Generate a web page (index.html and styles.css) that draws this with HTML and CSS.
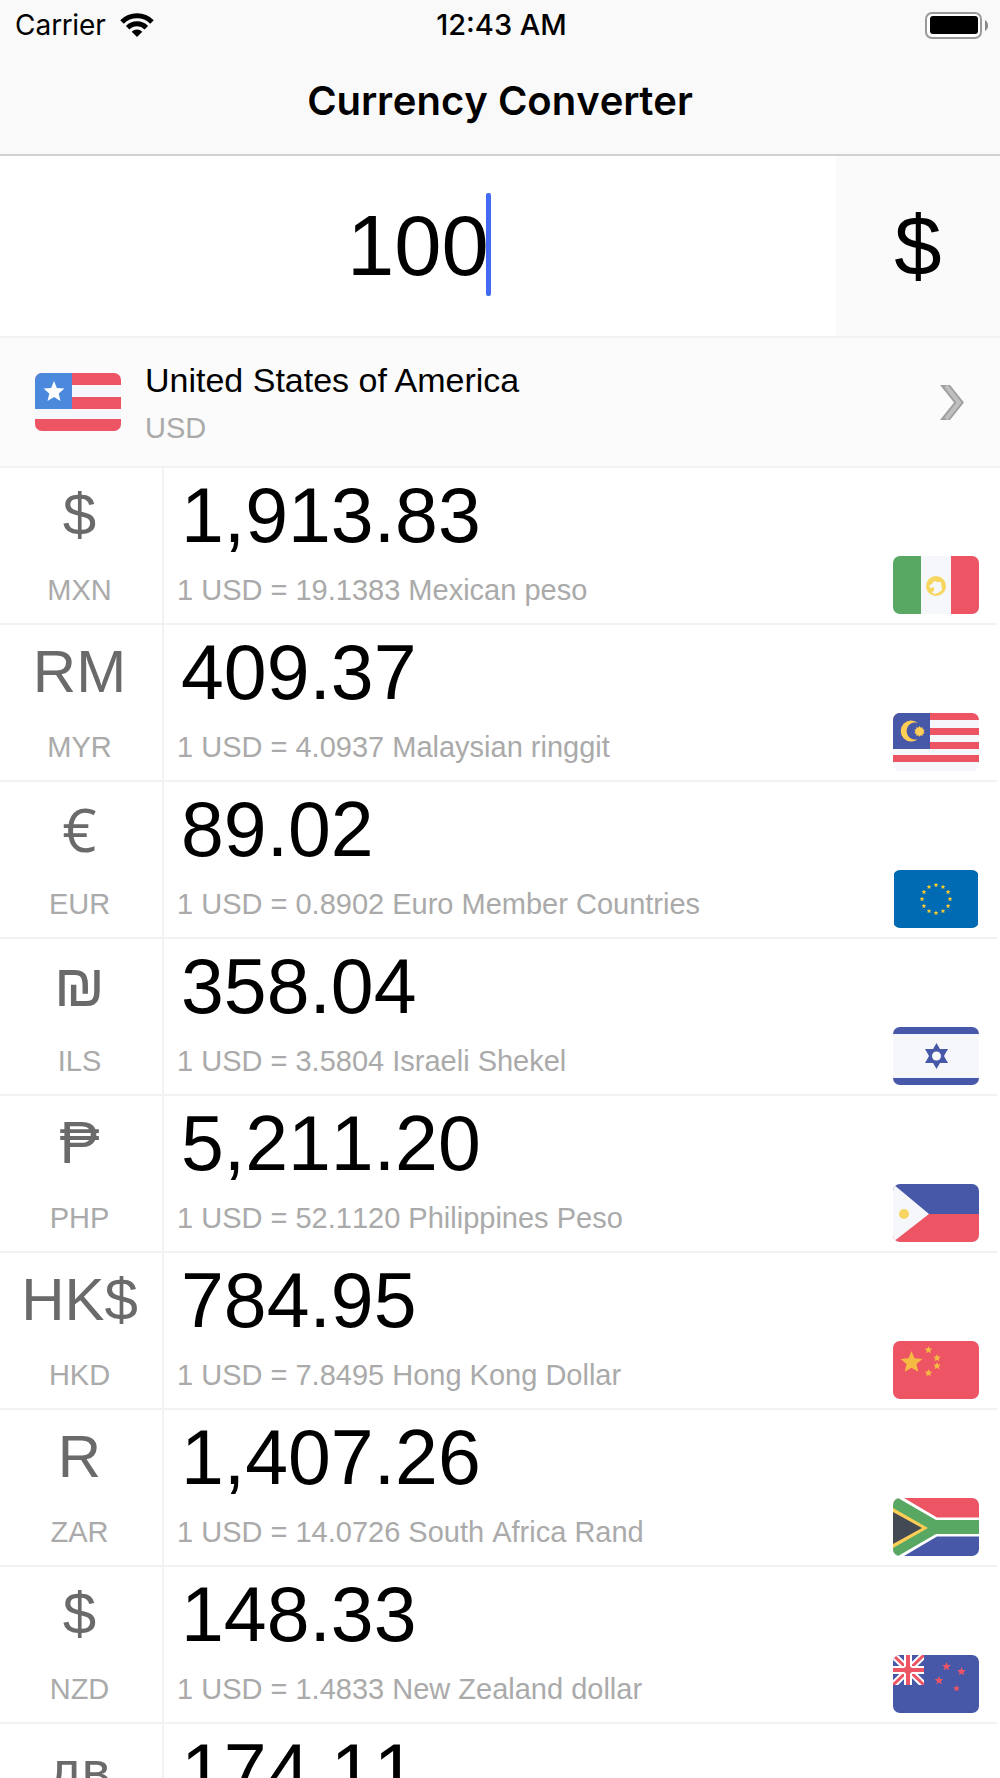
FILE: index.html
```html
<!DOCTYPE html>
<html lang="en">
    <head>
        <meta charset="UTF-8">
        <meta name="viewport" content="width=device-width, initial-scale=1">
        <title>Currency Converter</title>
        <link rel="stylesheet" href="styles.css">
    </head>
    <body>
    <svg class="defs" aria-hidden="true">
        <symbol id="star" viewBox="-10 -10 20 20">
            <path d="M0-10 2.6-3.6 9.5-3.1 4.3 1.4 5.9 8.1 0 4.5-5.9 8.1-4.3 1.4-9.5-3.1-2.6-3.6z"/>
        </symbol>
    </svg>
    <div class="screen">
        <header class="header">
            <div class="status-bar">
                <div class="carrier">
                    <span>Carrier</span>
                    <svg width="34" height="24" viewBox="0 0 34 24">
                        <path d="M2 9A21.2 21.2 0 0 1 32 9M7.7 14.7A13.2 13.2 0 0 1 26.3 14.7" fill="none" stroke="#000" stroke-width="5"/>
                        <path d="M17 24 11.7 18.7A7.5 7.5 0 0 1 22.3 18.7z"/>
                    </svg>
                </div>
                <div class="time">12:43 AM</div>
                <svg class="battery" width="63" height="27" viewBox="0 0 63 27">
                    <rect x="1" y="1" width="55" height="25" rx="6" fill="#fff" stroke="#999" stroke-width="2"/>
                    <rect x="5" y="4" width="48" height="18" rx="3"/>
                    <path d="M60 8q3 2 3 5.500t-3 5.500z" fill="#888"/>
                </svg>
            </div>
            <h1 class="title">Currency Converter</h1>
        </header>

        <div class="amount">
            <div class="amount-field">
                <input type="text" id="id-input-amount" value="100" inputmode="decimal" aria-label="Amount">
                <span class="caret"></span>
            </div>
            <label class="amount-symbol" for="id-input-amount">$</label>
        </div>

        <button type="button" class="base">
            <svg class="flag" viewBox="0 0 86 58">
                <path fill="#f5f7fb" d="M0 0h86v58H0z"/>
                <path fill="#ed5565" d="M0 0h86v12H0zM0 24h86v12H0zM0 46h86v12H0z"/>
                <path fill="#4a89dc" d="M0 0h37v36H0z"/>
                <use href="#star" x="8" y="8" width="22" height="22" fill="#fff"/>
            </svg>
            <span class="base-text">
                <span class="base-name">United States of America</span>
                <span class="base-code">USD</span>
            </span>
            <svg class="chevron" width="24" height="35" viewBox="0 0 24 35">
                <path d="M0 0h10l14 17.500L10 35H0l14-17.500z" fill="#a0a0a0"/>
                <path d="M6 1l13 16.500L6 34" fill="none" stroke="#bfbfbf" stroke-width="4"/>
            </svg>
        </button>

        <ul class="rates">
            <li class="rate">
                <div class="unit">
                    <span class="symbol">$</span>
                    <span class="code">MXN</span>
                </div>
                <div class="info">
                    <div class="value">1,913.83</div>
                    <div class="desc">1 USD = 19.1383 Mexican peso</div>
                </div>
                <svg class="flag" viewBox="0 0 86 58">
                    <path fill="#f5f7fb" d="M0 0h86v58H0z"/>
                    <path fill="#58a864" d="M0 0h28v58H0z"/>
                    <path fill="#ed5565" d="M58 0h28v58H58z"/>
                    <circle cx="43" cy="30" r="10" fill="#f6d660"/>
                    <path fill="#f5f7fb" d="M36 30l4-3 1-2 3 1h4l1 8-4 3-4 1-2-2 2-1v-4l-3 1z"/>
                </svg>
            </li>
            <li class="rate">
                <div class="unit">
                    <span class="symbol">RM</span>
                    <span class="code">MYR</span>
                </div>
                <div class="info">
                    <div class="value">409.37</div>
                    <div class="desc">1 USD = 4.0937 Malaysian ringgit</div>
                </div>
                <svg class="flag" viewBox="0 0 86 58">
                    <path fill="#f5f7fb" d="M0 0h86v58H0z"/>
                    <path fill="#ed5565" d="M0 0h86v7H0zM0 15h86v7H0zM0 29h86v7H0zM0 42h86v7H0z"/>
                    <path fill="#4758a9" d="M0 0h37v36H0z"/>
                    <path fill="#ffce54" d="M25 10a10.500 10.500 0 1 0 0 16a8.500 8.500 0 1 1 0-16z"/>
                    <path fill="#ffce54" d="M26.500 13l1.200 1.800 2-.600 0 2.100 2 .700-1.200 1.500 1.200 1.700-2 .600 0 2-2-.600-1.200 1.600-1.200-1.600-2 .600 0-2-2-.600 1.200-1.700-1.200-1.500 2-.700 0-2.100 2 .600z"/>
                </svg>
            </li>
            <li class="rate">
                <div class="unit">
                    <span class="symbol symbol-euro">€</span>
                    <span class="code">EUR</span>
                </div>
                <div class="info">
                    <div class="value">89.02</div>
                    <div class="desc">1 USD = 0.8902 Euro Member Countries</div>
                </div>
                <svg class="flag" viewBox="0 0 86 58">
                    <rect x="1" width="84" height="58" rx="3" fill="#006ab3"/>
                    <g fill="#fbca2c">
                        <use href="#star" x="40.500" y="12.500" width="5" height="5"/>
                        <use href="#star" x="47.500" y="14.400" width="5" height="5"/>
                        <use href="#star" x="52.600" y="19.500" width="5" height="5"/>
                        <use href="#star" x="54.500" y="26.500" width="5" height="5"/>
                        <use href="#star" x="52.600" y="33.500" width="5" height="5"/>
                        <use href="#star" x="47.500" y="38.600" width="5" height="5"/>
                        <use href="#star" x="40.500" y="40.500" width="5" height="5"/>
                        <use href="#star" x="33.500" y="38.600" width="5" height="5"/>
                        <use href="#star" x="28.400" y="33.500" width="5" height="5"/>
                        <use href="#star" x="26.500" y="26.500" width="5" height="5"/>
                        <use href="#star" x="28.400" y="19.500" width="5" height="5"/>
                        <use href="#star" x="33.500" y="14.400" width="5" height="5"/>
                    </g>
                </svg>
            </li>
            <li class="rate">
                <div class="unit">
                    <span class="symbol">₪</span>
                    <span class="code">ILS</span>
                </div>
                <div class="info">
                    <div class="value">358.04</div>
                    <div class="desc">1 USD = 3.5804 Israeli Shekel</div>
                </div>
                <svg class="flag" viewBox="0 0 86 58">
                    <path fill="#f5f7fb" d="M0 0h86v58H0z"/>
                    <path fill="#4758a9" d="M0 0h86v7H0zM0 51h86v7H0z"/>
                    <path fill="#4758a9" d="M43.500 16l11.500 20h-23z"/>
                    <path fill="#4758a9" d="M43.500 42l11.500-20h-23z"/>
                    <circle cx="43.500" cy="29" r="4.500" fill="#f5f7fb"/>
                </svg>
            </li>
            <li class="rate">
                <div class="unit">
                    <span class="symbol">₱</span>
                    <span class="code">PHP</span>
                </div>
                <div class="info">
                    <div class="value">5,211.20</div>
                    <div class="desc">1 USD = 52.1120 Philippines Peso</div>
                </div>
                <svg class="flag" viewBox="0 0 86 58">
                    <path fill="#4758a9" d="M0 0h86v30H0z"/>
                    <path fill="#ed5565" d="M0 30h86v28H0z"/>
                    <path fill="#f5f7fb" d="M0 0l36 30L0 58z"/>
                    <circle cx="11" cy="30" r="5" fill="#f6d660"/>
                </svg>
            </li>
            <li class="rate">
                <div class="unit">
                    <span class="symbol">HK$</span>
                    <span class="code">HKD</span>
                </div>
                <div class="info">
                    <div class="value">784.95</div>
                    <div class="desc">1 USD = 7.8495 Hong Kong Dollar</div>
                </div>
                <svg class="flag" viewBox="0 0 86 58">
                    <path fill="#ed5565" d="M0 0h86v58H0z"/>
                    <g fill="#f6bb42">
                        <use href="#star" x="7" y="10" width="23" height="23"/>
                        <use href="#star" x="31.500" y="5" width="8" height="8"/>
                        <use href="#star" x="40" y="13" width="8" height="8"/>
                        <use href="#star" x="40" y="21" width="8" height="8"/>
                        <use href="#star" x="31.500" y="28" width="8" height="8"/>
                    </g>
                </svg>
            </li>
            <li class="rate">
                <div class="unit">
                    <span class="symbol">R</span>
                    <span class="code">ZAR</span>
                </div>
                <div class="info">
                    <div class="value">1,407.26</div>
                    <div class="desc">1 USD = 14.0726 South Africa Rand</div>
                </div>
                <svg class="flag" viewBox="0 0 86 58">
                    <path fill="#ed5565" d="M0 0h86v29H0z"/>
                    <path fill="#4758a9" d="M0 29h86v29H0z"/>
                    <path fill="#fff" d="M0 0h11l33 19.500h42v19H44L11 58H0z"/>
                    <path fill="#58a864" d="M0 0h5l38 22h43v14H43L5 58H0z"/>
                    <path fill="#ffce54" d="M0 10l35 20L0 50z"/>
                    <path fill="#434a54" d="M0 14l29 16L0 46z"/>
                </svg>
            </li>
            <li class="rate">
                <div class="unit">
                    <span class="symbol">$</span>
                    <span class="code">NZD</span>
                </div>
                <div class="info">
                    <div class="value">148.33</div>
                    <div class="desc">1 USD = 1.4833 New Zealand dollar</div>
                </div>
                <svg class="flag" viewBox="0 0 86 58">
                    <path fill="#4758a9" d="M0 0h86v58H0z"/>
                    <svg width="31" height="30" viewBox="0 0 31 30">
                        <path stroke="#fff" stroke-width="7" d="M-1-1l33 32M32-1L-1 31"/>
                        <path stroke="#ed5565" stroke-width="3" d="M-1-1l33 32M32-1L-1 31"/>
                        <path stroke="#fff" stroke-width="8" d="M15 0v30M0 15h31"/>
                        <path stroke="#ed5565" stroke-width="4" d="M15 0v30M0 15h31"/>
                        <circle cx="15" cy="15" r="4" fill="#ed5565"/>
                    </svg>
                    <g fill="#ed5565">
                        <use href="#star" x="49" y="7" width="9" height="9"/>
                        <use href="#star" x="64" y="12" width="9" height="9"/>
                        <use href="#star" x="41.500" y="21" width="9" height="9"/>
                        <use href="#star" x="60" y="30" width="7" height="7"/>
                    </g>
                </svg>
            </li>
            <li class="rate">
                <div class="unit">
                    <span class="symbol symbol-lev">лв</span>
                    <span class="code">BGN</span>
                </div>
                <div class="info">
                    <div class="value">174.11</div>
                    <div class="desc">1 USD = 1.7411 Bulgarian lev</div>
                </div>
            </li>
        </ul>
    </div>
    </body>
</html>
```

FILE: styles.css
```css
* {
    box-sizing: border-box;
}
body {
    margin: 0;
    background-color: #fff;
    color: #000;
    font-family: "Liberation Sans", Arial, sans-serif;
    font-kerning: none;
}
.defs {
    display: none;
}
.screen {
    height: 100vh;
    display: flex;
    flex-direction: column;
    overflow: hidden;
}

/* status bar + title */
.header {
    padding-bottom: 2px;
    border-bottom: 2px solid #d0d0d0;
    background-color: #f9f9f9;
    font-family: Inter, sans-serif;
}
.status-bar {
    display: grid;
    grid-template-columns: 1fr auto 1fr;
    align-items: center;
    height: 50px;
    padding: 0 12px 0 15px;
    font-size: 28px;
    line-height: 50px;
}
.carrier {
    display: flex;
    align-items: center;
    gap: 14px;
}
.time {
    font-size: 29px;
    font-weight: 500;
}
.battery {
    justify-self: end;
}
.title {
    margin: 0;
    font-size: 40px;
    font-weight: 600;
    line-height: 102px;
    text-align: center;
}

/* amount */
.amount {
    display: flex;
    border-bottom: 2px solid #f2f2f2;
    font-size: 85px;
    line-height: 180px;
}
.amount-field {
    position: relative;
    flex: 1;
}
.amount-field input {
    display: block;
    width: 100%;
    height: 180px;
    padding: 0;
    border: none;
    outline: none;
    background: none;
    font: inherit;
    text-align: center;
}
.caret {
    position: absolute;
    top: 37px;
    left: calc(50% + 68px);
    width: 5px;
    height: 103px;
    border-radius: 2px;
    background-color: #426bf2;
}
.amount-symbol {
    width: 164px;
    background-color: #fafafa;
    text-align: center;
}

/* base currency */
.base {
    display: flex;
    align-items: center;
    gap: 24px;
    width: 100%;
    padding: 16px 36px 16px 35px;
    border: none;
    border-bottom: 2px solid #f2f2f2;
    background-color: #fbfbfb;
    color: #000;
    font-family: inherit;
    text-align: left;
}
.base-text {
    flex: 1;
}
.base-name,
.base-code {
    display: block;
}
.base-name {
    font-size: 34px;
    line-height: 52px;
}
.base-code {
    color: #aaa;
    font-size: 29px;
    line-height: 44px;
}

.flag {
    flex: none;
    width: 86px;
    height: 58px;
    border-radius: 7px;
}

/* rates list */
.rates {
    flex: 1;
    min-height: 0;
    margin: 0;
    padding: 0 3px 0 0;
    overflow: hidden;
    list-style: none;
}
.rate {
    display: flex;
    height: 157px;
    padding-right: 18px;
    border-bottom: 2px solid #f2f2f2;
}
.rate .flag {
    align-self: flex-end;
    margin-bottom: 9px;
}
.unit {
    width: 164px;
    padding-right: 3px;
    border-right: 2px solid #f2f2f2;
    text-align: center;
}
.symbol,
.code {
    display: block;
}
.symbol {
    color: #6a6a6a;
    font-size: 60px;
    line-height: 94px;
}
.symbol-euro {
    font-family: "Open Sans", sans-serif;
    font-weight: 500;
}
.symbol-lev {
    font-family: "DejaVu Sans", sans-serif;
    font-size: 52px;
}
.code,
.desc {
    color: #aaa;
    font-size: 29px;
    line-height: 56px;
}
.info {
    flex: 1;
    padding-left: 13px;
}
.value {
    padding-left: 4px;
    font-size: 77px;
    line-height: 94px;
}
```
